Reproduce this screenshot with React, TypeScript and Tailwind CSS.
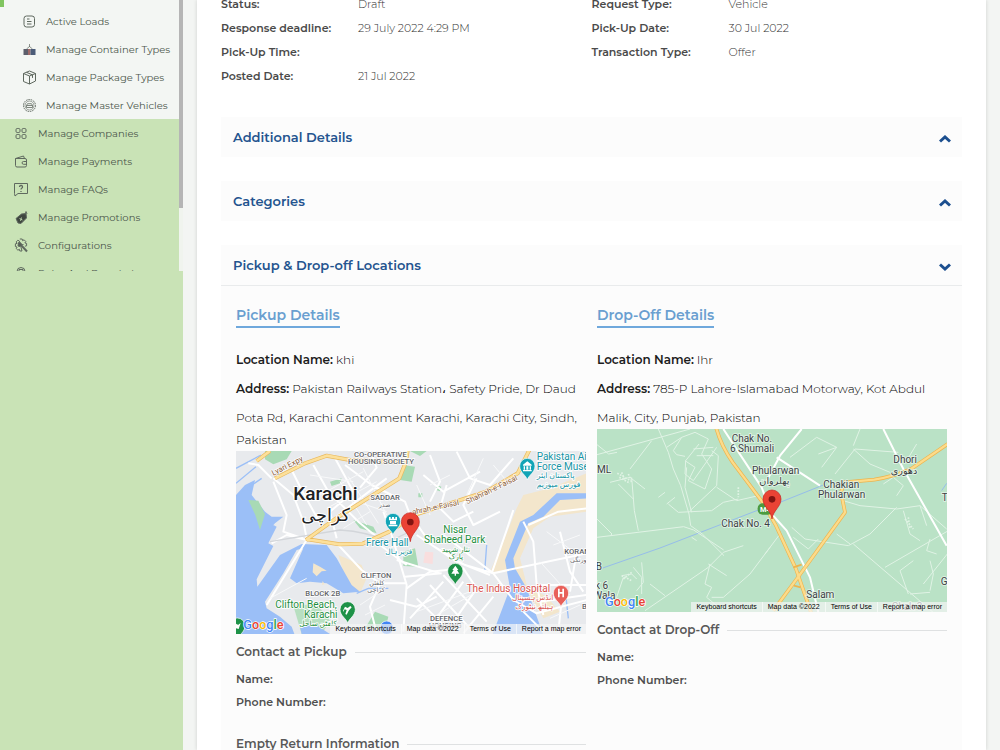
import React, { useState } from 'react';

interface MenuItem {
  label: string;
  icon: React.ReactNode;
}

interface Detail {
  label: string;
  value: string;
}

const subMenu: MenuItem[] = [
  {
    label: 'Active Loads',
    icon: (
      <>
        <rect x="2" y="2" width="10.5" height="11" rx="2.5" />
        <path d="M5 5h2.500M5 7.500h4.500M5 10h4.500" strokeWidth="1.200" />
      </>
    ),
  },
  {
    label: 'Manage Container Types',
    icon: (
      <>
        <path d="M7.500 2v3M4.500 7l3-2.500 3 2.500" strokeWidth="0.700" />
        <rect x="1.500" y="7" width="4.500" height="6" fill="#5c5f6b" stroke="none" />
        <rect x="6" y="7" width="2.500" height="6" fill="#a06a68" stroke="none" />
        <rect x="8.500" y="7" width="5" height="6" fill="#4b5c78" stroke="none" />
      </>
    ),
  },
  {
    label: 'Manage Package Types',
    icon: <path d="M7.500 1 13.500 3.500v7.500l-6 3L1.500 11.500v-8zM1.500 3.500 7.500 6l6-2.500M7.500 6v8M4.500 2.300l6 2.600v3" />,
  },
  {
    label: 'Manage Master Vehicles',
    icon: (
      <>
        <circle cx="7.500" cy="7.500" r="6" strokeDasharray="1.600 0.800" strokeWidth="1" />
        <circle cx="7.500" cy="7.500" r="4.500" strokeWidth="0.600" />
        <path d="M4.500 9.500v-2l1-1.800h4l1 1.800v2zM4.500 7.500h6" strokeWidth="0.800" />
      </>
    ),
  },
];

const mainMenu: MenuItem[] = [
  {
    label: 'Manage Companies',
    icon: (
      <>
        <rect x="2" y="2.500" width="4" height="4" rx="1.200" />
        <rect x="8" y="2.500" width="4" height="4" rx="1.200" />
        <rect x="2" y="8.500" width="4" height="4" rx="1.200" />
        <rect x="8" y="8.500" width="4" height="4" rx="1.200" />
      </>
    ),
  },
  {
    label: 'Manage Payments',
    icon: (
      <path d="M1.500 4.500h9.500a1.500 1.500 0 0 1 1.500 1.500v5.500a1.500 1.500 0 0 1-1.500 1.500h-8A1.500 1.500 0 0 1 1.500 11.500zM1.500 4.500l8-2.500 1 2.500M12.500 7.500H9.500a1.300 1.300 0 0 0 0 2.800h3z" />
    ),
  },
  {
    label: 'Manage FAQs',
    icon: (
      <>
        <path d="M.5 1.500h13v10H4L1 14l-.5-2.500z" />
        <path d="M5.500 5a1.500 1.500 0 1 1 2.200 1.300c-.6.300-.7.600-.7 1.200M7 9v1" strokeWidth="1.300" />
      </>
    ),
  },
  {
    label: 'Manage Promotions',
    icon: (
      <>
        <path d="M2 8.500 7.500 4l4.500-.5.500 4.500L7 13.500l-3-.5z" fill="#3f4740" />
        <path d="M11 4.500 12 1.500l1 2.500" />
        <path d="M5.500 8.500 8.500 10M7.500 7.500 6.500 11" stroke="#c9e3b6" strokeWidth="0.800" />
      </>
    ),
  },
  {
    label: 'Configurations',
    icon: (
      <>
        <path d="M5.800 1h2.400l.4 1.700 1.500-.9 1.700 1.700-.9 1.500 1.700.4v2.400l-1.700.4M8 13H5.800l-.4-1.700-1.500.9-1.700-1.700.9-1.500L1.400 8.600V5.800l1.700-.4-.9-1.500 1.700-1.700 1.500.9z" />
        <path d="M4 5.500 6 7l3.500-.5" />
        <path d="M6.500 6.500l6.500 7" strokeWidth="2" />
        <path d="M4.500 4.500l2.500.5.5 2-1.500 1.500-2-.5z" fill="#566056" />
      </>
    ),
  },
  {
    label: 'Roles And Permissions',
    icon: (
      <>
        <path d="M3 5.500a4 4 0 0 1 8 0" />
        <path d="M1.500 6h11v6h-11zM5 5V3.500h4V5" />
      </>
    ),
  },
];

const leftDetails: Detail[] = [
  { label: 'Status:', value: 'Draft' },
  { label: 'Response deadline:', value: '29 July 2022 4:29 PM' },
  { label: 'Pick-Up Time:', value: '' },
  { label: 'Posted Date:', value: '21 Jul 2022' },
];

const rightDetails: Detail[] = [
  { label: 'Request Type:', value: 'Vehicle' },
  { label: 'Pick-Up Date:', value: '30 Jul 2022' },
  { label: 'Transaction Type:', value: 'Offer' },
];

function NavRow({ item, nested }: { item: MenuItem; nested?: boolean }) {
  return (
    <li>
      <a
        href="#"
        className={`flex h-7 items-center gap-[9px] whitespace-nowrap text-[10px] text-[#4c564c] ${
          nested ? 'pl-[22px]' : 'pl-[14px]'
        }`}
      >
        <svg viewBox="0 0 15 15" className="h-[15px] w-[15px] shrink-0" fill="none" stroke="#5f695f" strokeWidth="1">
          {item.icon}
        </svg>
        {item.label}
      </a>
    </li>
  );
}

function Sidebar() {
  return (
    <aside className="w-[183px] shrink-0 bg-[#c9e3b6]">
      <div className="flex h-[271px] overflow-hidden">
        <nav className="min-w-0 flex-1 overflow-hidden">
          <ul className="bg-[#f3f6f3]">
            <li className="h-[7px] border-l-4 border-[#80c560]" />
            {subMenu.map((item) => (
              <NavRow key={item.label} item={item} nested />
            ))}
          </ul>
          <ul>
            {mainMenu.map((item) => (
              <NavRow key={item.label} item={item} />
            ))}
          </ul>
        </nav>
        <div className="w-1 bg-[#f0f4ee]">
          <div className="h-[208px] bg-[#b5b5b5]" />
        </div>
      </div>
    </aside>
  );
}

function DetailList({ items }: { items: Detail[] }) {
  return (
    <dl className="text-[11px] leading-6">
      {items.map((item) => (
        <div key={item.label} className="grid grid-cols-[137px_1fr]">
          <dt className="font-semibold text-[#4a4a4a]">{item.label}</dt>
          <dd className="font-light text-[#333333]">{item.value}</dd>
        </div>
      ))}
    </dl>
  );
}

interface AccordionProps {
  title: string;
  defaultOpen?: boolean;
  children?: React.ReactNode;
}

function Accordion({ title, defaultOpen = false, children }: AccordionProps) {
  const [open, setOpen] = useState(defaultOpen);

  return (
    <section className="bg-[#fcfcfc]">
      <button
        type="button"
        aria-expanded={open}
        onClick={() => setOpen(!open)}
        className="flex h-10 w-full items-center justify-between pt-[2px] pr-[11px] pl-3 text-left text-[13px] font-semibold text-[#24548f]"
      >
        {title}
        <svg viewBox="0 0 12 8" className="mt-[2px] h-2 w-3" fill="none" stroke="#1c4f8f" strokeWidth="3">
          <path d={open ? 'M1 1.500 6 6l5-4.500' : 'M1 6.500 6 2l5 4.500'} />
        </svg>
      </button>
      {open && children && <div className="border-t border-[#e9ebec]">{children}</div>}
    </section>
  );
}

function GoogleLogo({ x, y }: { x: number; y: number }) {
  return (
    <text x={x} y={y} fontSize="38" fontWeight="500" stroke="#fff" strokeWidth="4" paintOrder="stroke">
      <tspan fill="#4285f4">G</tspan>
      <tspan fill="#ea4335">o</tspan>
      <tspan fill="#fbbc05">o</tspan>
      <tspan fill="#4285f4">g</tspan>
      <tspan fill="#34a853">l</tspan>
      <tspan fill="#ea4335">e</tspan>
    </text>
  );
}

function Marker({ x, y }: { x: number; y: number }) {
  return (
    <g transform={`translate(${x} ${y})`}>
      <path d="M0 0C-3-26-27-36-27-60a27 27 0 0 1 54 0C27-36 3-26 0 0z" fill="#ea4335" stroke="#c5221f" strokeWidth="2" />
      <circle cx="0" cy="-59" r="10" fill="#811411" />
    </g>
  );
}

function Poi({ x, y, color, children }: { x: number; y: number; color: string; children: React.ReactNode }) {
  return (
    <g transform={`translate(${x} ${y})`}>
      <path d="M0 0C-3-14-23-22-23-42a23 23 0 0 1 46 0C23-22 3-14 0 0z" fill={color} stroke="#fff" strokeWidth="2" />
      <g fill="#fff">{children}</g>
    </g>
  );
}

function PickupMap() {
  return (
    <svg
      viewBox="18 18 1050 549"
      preserveAspectRatio="xMidYMid slice"
      className="h-full w-full font-[Roboto,'DejaVu_Sans',sans-serif]"
      role="img"
      aria-label="Map of pickup location"
    >
      <rect x="0" y="0" width="1080" height="600" fill="#e8eaed" />

      {/* Parks and sand */}
      <path d="M105 18h80l-15 25-40 15-25-15zM520 60l35 5-10 45-35-5zM520 320l35-10 10 55-45-2zM435 500l40 15-10 40-60-5zM300 110l35-10-5 15-25 8zM370 225l60 20 10 20-50-15zM540 18h50l-20 15zM565 145l12 0 0 12-12 0zM620 120l14 5-4 14-12-4z" fill="#a8dab5" />
      <path d="M325 330l70 30 15 40-20 45-40-30zM780 380 820 290 860 190 880 150 960 130 1070 85v115l-110 15-50 35-40 90 20 80 60 35 40 45-50 20-50-90-50-50z" fill="#f3e6cc" />
      <path d="M585 320l25 2-2 35-28-4z" fill="#f9dede" />

      {/* Water */}
      <path d="M18 150 45 120 75 105l-10 45 40 50 20 15h35l-25 20-25 27 20-22 10 5-25 50 15 8-50 100 2 22 68-95 65-33 75 3 30 40 25 45 20 35 25 20-50 5-50-30-50-5-40 5-20-15 40-90-20 5-40 70-55 85 5 20 40 25 35 30 10 27H18z" fill="#9bbff7" />
      <path d="M250 355l20 10 20 12-15 2-15 15-12-12zM278 408l6 10-8 2z" fill="#f3e6cc" />
      <path d="M55 165l30 2 20 40-15 48-14-45z" fill="#a8dab5" />
      <path d="M190 482l70-5 40 50-25 40h-60z" fill="#b7dfc0" />
      <path d="M210 545l40-10 50 32H215zM825 345 870 230l40-20 70-65h90v15l-80 5-50 50-45 20-45 105 5 30 35 60 50 140H787l53-140z" fill="#9bbff7" />
      <path d="M18 70l75-40M18 115l60-50M30 145l65-45M380 445l35-15 60 0M770 300l-6 80M900 480l20 80M1005 430l10 90" stroke="#9bbff7" strokeWidth="4" fill="none" />

      {/* Streets */}
      <g stroke="#fff" fill="none" strokeWidth="6" strokeLinejoin="round">
        <path d="M125 100 85 60 55 55M130 100l60 50 30 80 10 50M185 75l30 60 50 90M250 60l45 80 90 90 60 50M310 30l60 110-70 60 20 80M345 60l80 60 100 50 30 80M470 100l-80 60-90 70M230 285l-60-15-45 25M130 110l40 100-10 50 60 20M230 285 110 480" />
        <path d="M325 300l70 75 55 40h80M450 415l-30 70 20 80M460 200l25 70 45 150-10 140M420 18l20 50-50 60M555 230l50 70 100 60 85 25M560 270l120 80 100 40M580 90l60 50 110-60M600 30l30 80-30 60M680 20l40 80 60 20 70-80M650 120l-20 70 40 40 60-30M740 100l-40 80 30 60 80-40" />
        <path d="M790 385 640 270M790 385l90-20 190-40M790 385l60 80 70 40 150-40M850 195l-20 60-45 130M880 230l30 60 10 130 20 90M990 260l30 120 40 60M895 240l90-40 85-10M530 430l70-50 100-10 40 60M560 460l90 90M600 420l120 130M640 390l130 140M540 520l100-110M590 560l110-150M650 560l90-130M700 565l90-110" />
        <path d="M450 300l80 60M500 345l130 40M525 395l110-10M480 465l80 20 60-30M920 420h150M930 470l140-20M880 500l60 60M1000 420l-15 140M1040 320l-20 120" />
      </g>
      <g stroke="#f8f9fa" fill="none" strokeWidth="3">
        <path d="M270 150l130-70M290 190l150-80M330 110l80 130M355 95l90 140M400 70l70 140M210 130l120 30M240 90l130 20M380 170l90 30M340 250l80-50M560 120l40 90M600 120l60-30M760 40l-50 110M790 60l50 60M560 500l160-60M620 510l120-70M930 350l90 100M950 260l80 60M970 300l80-30M960 520l90-40M120 460l110-60M390 480l60-40M405 510l60-30" />
      </g>
      <path d="M120 290q120-20 210-35 80 5 150 35M420 300q80-10 150-60" stroke="#d3d6da" strokeWidth="4" fill="none" />

      {/* Highways */}
      <g fill="none" strokeLinejoin="round">
        <path d="M135 100 225 55 290 32 360 45 510 52M228 285l90-65 190-120 20-50 5-35M228 282l100 16 70-2 80-36 90-55 200-65 95-55 40-80M80 48l40-30" stroke="#e9b95f" strokeWidth="12" />
        <path d="M135 100 225 55 290 32 360 45 510 52M228 285l90-65 190-120 20-50 5-35M228 282l100 16 70-2 80-36 90-55 200-65 95-55 40-80M80 48l40-30" stroke="#fce09b" strokeWidth="8" />
      </g>

      {/* Road names */}
      <g fontSize="23" fill="#8a5a33" stroke="#fff" strokeWidth="4" paintOrder="stroke">
        <text transform="translate(130 92) rotate(-27)">Lyari Expy</text>
        <text transform="translate(548 209) rotate(-12)">ahrah-e-Faisal</text>
        <text transform="translate(712 178) rotate(-26)">Shahrah-e-Faisal</text>
      </g>

      {/* Districts */}
      <g fontSize="23" fill="#5f6368" stroke="#fff" strokeWidth="4" paintOrder="stroke" fontWeight="500">
        <text x="372" y="35">CO-OPERATIVE</text>
        <text x="354" y="56">HOUSING SOCIETY</text>
        <text x="421" y="165">SADDAR</text>
        <text x="446" y="186" fontSize="19">صدر</text>
        <text x="392" y="399">CLIFTON</text>
        <text x="418" y="421" fontSize="19">کلفٹن</text>
        <text x="412" y="441" fontSize="19">کراچی</text>
        <text x="226" y="452">BLOCK 2B</text>
        <text x="600" y="529">DEFENCE</text>
        <text x="596" y="550">HOUSING</text>
        <text x="1003" y="327">KORANGI</text>
        <text x="1020" y="350" fontSize="19">کورنگی</text>
        <text x="1056" y="492">B</text>
      </g>

      {/* City */}
      <g fill="#202124" stroke="#fff" strokeWidth="6" paintOrder="stroke">
        <text x="190" y="166" fontSize="57" fontWeight="500">Karachi</text>
        <text x="214" y="227" fontSize="53">کراچی</text>
      </g>

      {/* Places */}
      <g fontSize="30" stroke="#fff" strokeWidth="5" paintOrder="stroke">
        <g fill="#1593a5">
          <text x="408" y="302">Frere Hall</text>
          <text x="466" y="327" fontSize="22">فریر ہال</text>
          <text x="920" y="46">Pakistan Air</text>
          <text x="920" y="76">Force Museum</text>
          <text x="920" y="100" fontSize="23">پاکستان ایئر</text>
          <text x="920" y="125" fontSize="23">فورس میوزیم</text>
        </g>
        <g fill="#1e8e3e">
          <text x="136" y="490">Clifton Beach,</text>
          <text x="222" y="518">Karachi</text>
          <text x="208" y="544" fontSize="22">کلفٹن ساحل</text>
          <text x="640" y="265">Nisar</text>
          <text x="582" y="295">Shaheed Park</text>
          <text x="636" y="320" fontSize="22">نثار شہید</text>
          <text x="656" y="343" fontSize="22">پارک</text>
        </g>
        <g fill="#d9534f">
          <text x="710" y="440">The Indus Hospital</text>
          <text x="846" y="466" fontSize="22">انڈس ہسپتال</text>
          <text x="856" y="491" fontSize="22">ہیلتھ نیٹورک</text>
        </g>
      </g>

      <Poi x={489} y={270} color="#12a4b6">
        <path d="M-12-54h5v5h4v-5h6v5h4v-5h5v10H-12zM-9-42H9v10H-9zM-13-31h26v5h-26z" />
      </Poi>
      <Poi x={892} y={105} color="#12a4b6">
        <path d="M-13-46 0-56l13 10v3h-26zM-11-41h4v10h-4zM-3-41h6v10h-6zM7-41h4v10H7zM-13-30h26v4h-26z" />
      </Poi>
      <Poi x={353} y={535} color="#1e9248">
        <path d="M-14-38-8-50l8 4 8-6 4 4-9 10-6 12-4-2 4-12-6-2-5 8z" />
      </Poi>
      <Poi x={676} y={420} color="#1e9248">
        <path d="M0-58-9-45h4l-7 11h10v6h4v-6H12L5-45h4z" />
      </Poi>
      <Poi x={993} y={486} color="#e8605a">
        <path d="M-9-55h5v10h8v-10h5v26H4v-11h-8v11h-5z" />
      </Poi>
      <Poi x={22} y={584} color="#1e9248">
        <path d="M-10-38l8-10 4 4 8-6-6 18-8-2z" />
      </Poi>
      <circle cx="470" cy="548" r="20" fill="#4285f4" stroke="#fff" strokeWidth="2" />
      <Marker x={541} y={290} />
      <GoogleLogo x={40} y={551} />
    </svg>
  );
}

function DropoffMap() {
  return (
    <svg
      viewBox="21 15 1050 549"
      preserveAspectRatio="xMidYMid slice"
      className="h-full w-full font-[Roboto,'DejaVu_Sans',sans-serif]"
      role="img"
      aria-label="Map of drop-off location"
    >
      <rect x="0" y="0" width="1100" height="600" fill="#bae2c6" />

      {/* Canal */}
      <path d="M21 438 210 372 505 258 570 235l130-52M1055 200l15-22" stroke="#96bdea" strokeWidth="3" fill="none" />

      {/* Local roads */}
      <g stroke="#e0f3e5" strokeWidth="3" fill="none" strokeLinejoin="round">
        <path d="M21 92 210 40l90-25M205 15l30 70 15 50 22 50 25 85 5 35 35 25 65 65M185 50l-65 85M21 62l35 28 25-5M60 175l60-15 45 35M85 180l45 45M125 160l8 100 12 60M21 340l180-22 80-10 30 10 90 60" />
        <path d="M230 70l45-30 40-15 40 20-20 45 30 45-20 60-50-25 20-40-30-20M275 40l-25 40 10 12 25 5M310 75l60-5M320 95l50 0M380 70l-70 100-25-20 2-40 40-50M290 130l-5 60 20 75M235 240l30 25 100-5 35-25 45-10M300 260l80-75 5-90-20-15M380 190l60 40 65-15M230 240l25-20M205 220l20-15" />
        <path d="M165 560l190-130 45-45 60-20M355 420l55 35M360 420l-15 60 20 10-15 30 30 25M540 370l-60 80-80 70-35 0M130 430l25 30 0 50M155 415l5 60-20 25M180 480l45 35M100 460l-20 60-35 20M21 285l45 45-5 5M95 455l30-5 15 15M305 340l15 10" />
        <path d="M600 100l80-60 60 30-45 60M740 70l-55 20M810 15l-20 50M735 150l60-75 130 10M790 75l50 45 60 25M880 180l30-20 30 25-20 30M700 195l60 35 50 15 110 10 70-10 80 70M920 250l-80 80-65 35-130-20-40-35" />
        <path d="M610 340l45 35 30-30M790 360l280 240M885 430l190-110M780 360l-40-30M1000 480l80-100M955 510l-25-70 40-30M960 510l60-5M1020 500l10-50-10-40M940 260l20 70 30 20M990 245l20 60M1040 390l-30-10 10-35M525 390l45-60M980 60l-30 50" />
      </g>
      <g stroke="#e0f3e5" strokeWidth="5" fill="none" strokeDasharray="5 4">
        <path d="M82 148l45 25M88 160l32 18M95 145l10 25M115 150l8 18M95 455l30 15M100 465l25-20M445 190v30M945 285l25 30M955 280l5 35" />
      </g>

      {/* Main roads */}
      <g stroke="#fff" fill="none" strokeWidth="6" strokeLinejoin="round">
        <path d="M400 15 515 190l30 80 45 50 70 140 25 105M635 15 570 95l-45 85M560 100l130 85M880 15l60 120 130 230" />
      </g>
      <g fill="none" strokeLinejoin="round">
        <path d="M378 10q15 55 50 105l90 120 40 70 60 130 45 130M550 560l70-95 145-200-12-60 10-30 90-8q60-10 110-32l110-75" stroke="#edb44e" strokeWidth="11" />
        <path d="M378 10q15 55 50 105l90 120 40 70 60 130 45 130M550 560l70-95 145-200-12-60 10-30 90-8q60-10 110-32l110-75" stroke="#fcdb8a" strokeWidth="7" />
        <path d="M610 430l25-8M612 485l20 5" stroke="#edb44e" strokeWidth="5" />
      </g>

      <g fill="#3c4043" fontSize="30" stroke="#e3f4e8" strokeWidth="5" paintOrder="stroke">
        <text x="425" y="53">Chak No.</text>
        <text x="420" y="83">6 Shumali</text>
        <text x="486" y="149">Phularwan</text>
        <text x="508" y="180" fontSize="29">پھلروان</text>
        <text x="700" y="191">Chakian</text>
        <text x="684" y="221">Phularwan</text>
        <text x="910" y="118">Dhori</text>
        <text x="902" y="149" fontSize="29">دھوری</text>
        <text x="394" y="309">Chak No. 4</text>
        <text x="649" y="523">Salam</text>
        <text x="21" y="146">ML</text>
        <text x="17" y="438">B</text>
        <text x="15" y="494">k 6</text>
        <text x="10" y="525">Wala</text>
        <text x="1055" y="232">T</text>
        <text x="1052" y="483">G</text>
        <text x="905" y="558">Chak 3</text>
      </g>

      <g>
        <rect x="503" y="238" width="46" height="34" rx="15" fill="#4b9b3f" />
        <text x="510" y="264" fontSize="22" fontWeight="700" fill="#fff">M4</text>
      </g>
      <Marker x={546} y={285} />
      <GoogleLogo x={45} y={546} />
    </svg>
  );
}

function MapFrame({ children }: { children: React.ReactNode }) {
  return (
    <div className="relative h-[183px] overflow-hidden">
      {children}
      <div className="absolute right-0 bottom-0 flex h-[10px] items-center bg-[#f5f5f5]/70 font-['Liberation_Sans',sans-serif] text-[7px] leading-[10px] whitespace-nowrap text-black">
        <button type="button" className="px-[5px]">
          Keyboard shortcuts
        </button>
        <span className="border-l border-white/60 px-[5px]">Map data ©2022</span>
        <a href="#" className="border-l border-white/60 px-[5px]">
          Terms of Use
        </a>
        <a href="#" className="border-l border-white/60 px-[5px]">
          Report a map error
        </a>
      </div>
    </div>
  );
}

function SectionTitle({ title }: { title: string }) {
  return (
    <h4 className="flex items-center gap-2 text-[12px] leading-5 font-semibold text-[#585858]">
      {title}
      <span className="h-px flex-1 bg-[#dfe1e2]" />
    </h4>
  );
}

function Contact({ title }: { title: string }) {
  return (
    <div className="mt-2">
      <SectionTitle title={title} />
      <div className="mt-[6px] text-[11px] leading-[23px] font-semibold text-[#4f4f4f]">
        <p>Name:</p>
        <p>Phone Number:</p>
      </div>
    </div>
  );
}

interface LocationProps {
  heading: string;
  name: string;
  address: string[];
  map: React.ReactNode;
  contactTitle: string;
  children?: React.ReactNode;
}

function Location({ heading, name, address, map, contactTitle, children }: LocationProps) {
  const [firstLine, ...otherLines] = address;

  return (
    <div className="min-w-0">
      <h3 className="inline-block border-b-2 border-[#6fa8dc] text-[14px] leading-[22px] font-semibold text-[#6a9fd0]">
        {heading}
      </h3>
      <div className="mt-[21px] text-[12px] leading-[22px] font-light text-black">
        <p className="mb-[7px]">
          <strong className="font-semibold text-[#1c1c1c]">Location Name:</strong> {name}
        </p>
        <p className="mb-[7px] whitespace-nowrap">
          <strong className="font-semibold text-[#1c1c1c]">Address:</strong> {firstLine}
        </p>
        {otherLines.map((line) => (
          <p key={line} className="whitespace-nowrap">
            {line}
          </p>
        ))}
      </div>
      <MapFrame>{map}</MapFrame>
      <Contact title={contactTitle} />
      {children}
    </div>
  );
}

export default function App() {
  return (
    <div className="flex h-screen overflow-hidden bg-[#f3f5f3] font-[Montserrat,Inter,'DejaVu_Sans',sans-serif]">
      <Sidebar />
      <main className="mx-[14px] min-w-0 flex-1 overflow-hidden bg-white px-6 shadow-[0_0_4px_rgba(0,0,0,0.15)]">
        {/* Load summary */}
        <div className="-mt-2 grid grid-cols-2">
          <DetailList items={leftDetails} />
          <DetailList items={rightDetails} />
        </div>

        <div className="mt-[29px] flex flex-col gap-6">
          <Accordion title="Additional Details" />
          <Accordion title="Categories" />
          <Accordion title="Pickup & Drop-off Locations" defaultOpen>
            <div className="grid grid-cols-2 gap-[11px] pt-[17px] pr-[15px] pb-6 pl-[15px]">
              <Location
                heading="Pickup Details"
                name="khi"
                address={[
                  'Pakistan Railways Station، Safety Pride, Dr Daud',
                  'Pota Rd, Karachi Cantonment Karachi, Karachi City, Sindh,',
                  'Pakistan',
                ]}
                map={<PickupMap />}
                contactTitle="Contact at Pickup"
              >
                <div className="mt-5">
                  <SectionTitle title="Empty Return Information" />
                </div>
              </Location>
              <Location
                heading="Drop-Off Details"
                name="lhr"
                address={['785-P Lahore-Islamabad Motorway, Kot Abdul', 'Malik, City, Punjab, Pakistan']}
                map={<DropoffMap />}
                contactTitle="Contact at Drop-Off"
              />
            </div>
          </Accordion>
        </div>
      </main>
    </div>
  );
}
